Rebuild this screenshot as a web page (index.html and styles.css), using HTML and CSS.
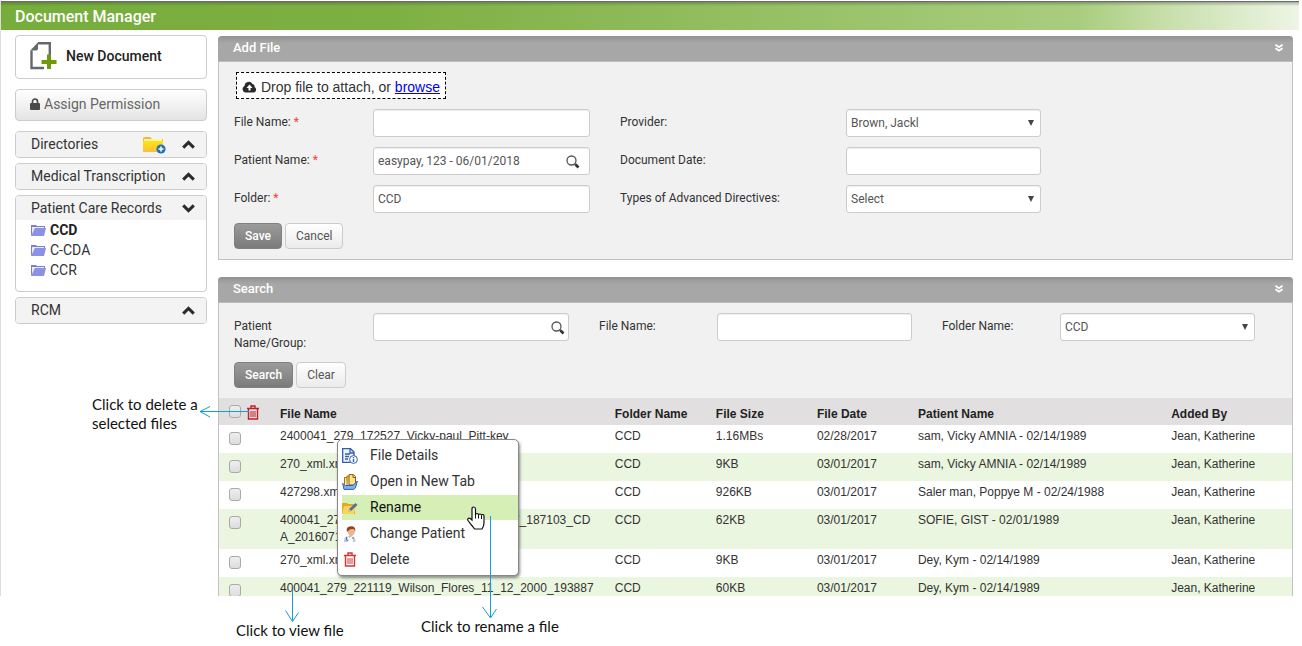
FILE: index.html
```html
<!DOCTYPE html>
<html lang="en">
<head>
<meta charset="utf-8">
<title>Document Manager</title>
<link rel="stylesheet" href="styles.css">
</head>
<body>
<svg class="defs" width="0" height="0" aria-hidden="true">
  <defs>
    <linearGradient id="gold" x1="0" y1="0" x2="0" y2="1"><stop offset="0" stop-color="#ffe600"/><stop offset="1" stop-color="#fdbb4a"/></linearGradient>
  </defs>
  <symbol id="folder" viewBox="0 0 15 13"><path d="M0 12V1h5l1 1h8v3H4z" fill="#7780d4"/><path d="M1 3h12v2H4L1 11z" fill="#e9ebfb"/><path d="M4 4h11l-2 8H0z" fill="#8b92e3"/></symbol>
  <symbol id="up" viewBox="0 0 13 9"><path d="M1.200 7.600 6.500 2.400l5.300 5.200" fill="none" stroke="#2b2b2b" stroke-width="3"/></symbol>
  <symbol id="down" viewBox="0 0 13 9"><path d="M1.200 1.400 6.500 6.600l5.300-5.200" fill="none" stroke="#2b2b2b" stroke-width="3"/></symbol>
  <symbol id="lens" viewBox="0 0 14 14"><circle cx="5.500" cy="5.500" r="4.500" fill="none" stroke="#555" stroke-width="1.300"/><path d="m8.500 8.500 1.500 1.500" stroke="#555" stroke-width="1.500"/><path d="m9.500 9.500 3 3" stroke="#333" stroke-width="2.600"/></symbol>
  <symbol id="arrow" viewBox="0 0 6 6"><path d="M0 0h6L3 6z" fill="#444"/></symbol>
  <symbol id="chevrons" viewBox="0 0 8 8"><path d="m.5.7 3.500 2.600L7.500.7M.5 4.200 4 6.800l3.500-2.600" fill="none" stroke="#fff" stroke-width="1.700"/></symbol>
  <symbol id="trash" viewBox="0 0 12 15"><path d="M0 3.500h12M4 3V1h4v2M1.500 4v10h9V4" fill="none" stroke="currentColor" stroke-width="1.400"/><path d="M4 6v6M6 6v6M8 6v6" stroke="currentColor" stroke-width="1"/></symbol>
</svg>
<div class="page">
  <div class="app">
    <header class="topbar"><h1>Document Manager</h1></header>
    <div class="columns">
      <aside class="sidebar">
        <button class="new-doc" type="button">
          <svg width="27" height="28" viewBox="0 0 27 28"><path d="M8 1.200h11.800V13M14 26H1.500V8.500" fill="none" stroke="#66696b" stroke-width="2.400"/><path d="M.3 8.500 8 .3V7l-1 1.500z" fill="#66696b"/><path d="M19 12.500V27M11.500 20h15" stroke="#6d9a0c" stroke-width="4"/></svg>
          New Document
        </button>
        <button class="assign" type="button">
          <svg width="10" height="12" viewBox="0 0 10 12"><path d="M2.500 6V3.500a2.500 2.500 0 0 1 5 0V6" fill="none" stroke="#4a4a4a" stroke-width="1.700"/><rect y="5" width="10" height="7" rx="1" fill="#4a4a4a"/></svg>
          Assign Permission
        </button>
        <section class="box">
          <h2>Directories
            <svg class="add-folder" width="23" height="18" viewBox="0 0 23 18"><path d="M0 3Q0 1 2 1h5l2 2h10q1 0 1 1v11q0 1-1 1H1q-1 0-1-1z" fill="#f8b630"/><path d="M1 3h18v2H1z" fill="#fff3ad"/><path d="M0 5h20v10q0 1-1 1H1q-1 0-1-1z" fill="url(#gold)"/><circle cx="18" cy="13" r="4.600" fill="#2173b8"/><path d="M18 10.500v5M15.500 13h5" stroke="#fff" stroke-width="1.600"/></svg>
            <svg width="13" height="9"><use href="#up"/></svg></h2>
        </section>
        <section class="box"><h2>Medical Transcription <svg width="13" height="9"><use href="#up"/></svg></h2></section>
        <section class="box open">
          <h2>Patient Care Records <svg width="13" height="9"><use href="#down"/></svg></h2>
          <ul class="tree">
            <li class="current"><svg width="15" height="13"><use href="#folder"/></svg>CCD</li>
            <li><svg width="15" height="13"><use href="#folder"/></svg>C-CDA</li>
            <li><svg width="15" height="13"><use href="#folder"/></svg>CCR</li>
          </ul>
        </section>
        <section class="box"><h2>RCM <svg width="13" height="9"><use href="#up"/></svg></h2></section>
      </aside>
      <main class="content">
        <section class="panel">
          <h2 class="panel-head">Add File <svg width="8" height="8"><use href="#chevrons"/></svg></h2>
          <form class="panel-body">
            <div class="drop">
              <svg width="15" height="12" viewBox="0 0 15 12"><path d="M3.500 11.500a3.500 3.500 0 0 1-1-6.600A4.300 4.300 0 0 1 10.500 3a2.500 2.500 0 0 1 2 3 3 3 0 0 1-.5 5.500z" fill="#2b2b2b"/><path d="M7.500 3.500 4.500 7h2v2.500h2V7h2z" fill="#fff"/></svg>
              <span>Drop file to attach, or <a href="#">browse</a></span>
            </div>
            <div class="add-grid">
              <label for="fname">File Name: <b>*</b></label>
              <input id="fname" type="text">
              <label class="second" for="provider">Provider:</label>
              <span class="pick"><select id="provider"><option>Brown, Jackl</option></select><svg width="6" height="6"><use href="#arrow"/></svg></span>
              <label for="pname">Patient Name: <b>*</b></label>
              <span class="find"><input id="pname" type="text" value="easypay, 123 - 06/01/2018"><svg width="14" height="14"><use href="#lens"/></svg></span>
              <label class="second" for="ddate">Document Date:</label>
              <input id="ddate" type="text">
              <label for="folderf">Folder: <b>*</b></label>
              <input id="folderf" type="text" value="CCD">
              <label class="second" for="types">Types of Advanced Directives:</label>
              <span class="pick"><select id="types"><option>Select</option></select><svg width="6" height="6"><use href="#arrow"/></svg></span>
            </div>
            <div class="buttons"><button class="primary" type="button">Save</button><button type="button">Cancel</button></div>
          </form>
        </section>
        <section class="panel results">
          <h2 class="panel-head">Search <svg width="8" height="8"><use href="#chevrons"/></svg></h2>
          <form class="panel-body">
            <div class="search-grid">
              <label for="group">Patient<br>Name/Group:</label>
              <span class="find"><input id="group" type="text"><svg width="14" height="14"><use href="#lens"/></svg></span>
              <label class="second" for="sfile">File Name:</label>
              <input id="sfile" type="text">
              <label class="second" for="sfolder">Folder Name:</label>
              <span class="pick"><select id="sfolder"><option>CCD</option></select><svg width="6" height="6"><use href="#arrow"/></svg></span>
            </div>
            <div class="buttons"><button class="primary" type="button">Search</button><button type="button">Clear</button></div>
          </form>
          <table class="files">
            <colgroup><col class="c-check"><col class="c-file"><col class="c-small"><col class="c-small"><col class="c-small"><col class="c-patient"><col></colgroup>
            <thead><tr><th><span class="tools"><input type="checkbox" aria-label="Select all"><svg width="12" height="15"><use href="#trash"/></svg></span></th><th>File Name</th><th>Folder Name</th><th>File Size</th><th>File Date</th><th>Patient Name</th><th>Added By</th></tr></thead>
            <tbody>
              <tr><td><input type="checkbox" aria-label="Select file"></td><td>2400041_279_172527_Vicky-paul_Pitt-key</td><td>CCD</td><td>1.16MBs</td><td>02/28/2017</td><td>sam, Vicky AMNIA - 02/14/1989</td><td>Jean, Katherine</td></tr>
              <tr><td><input type="checkbox" aria-label="Select file"></td><td>270_xml.xml</td><td>CCD</td><td>9KB</td><td>03/01/2017</td><td>sam, Vicky AMNIA - 02/14/1989</td><td>Jean, Katherine</td></tr>
              <tr><td><input type="checkbox" aria-label="Select file"></td><td>427298.xml</td><td>CCD</td><td>926KB</td><td>03/01/2017</td><td>Saler man, Poppye M - 02/24/1988</td><td>Jean, Katherine</td></tr>
              <tr><td><input type="checkbox" aria-label="Select file"></td><td>400041_279_221119_C11_12_2000_193887_187103_CDA_20160712</td><td>CCD</td><td>62KB</td><td>03/01/2017</td><td>SOFIE, GIST - 02/01/1989</td><td>Jean, Katherine</td></tr>
              <tr><td><input type="checkbox" aria-label="Select file"></td><td>270_xml.xml</td><td>CCD</td><td>9KB</td><td>03/01/2017</td><td>Dey, Kym - 02/14/1989</td><td>Jean, Katherine</td></tr>
              <tr><td><input type="checkbox" aria-label="Select file"></td><td>400041_279_221119_Wilson_Flores_11_12_2000_193887</td><td>CCD</td><td>60KB</td><td>03/01/2017</td><td>Dey, Kym - 02/14/1989</td><td>Jean, Katherine</td></tr>
            </tbody>
          </table>
        </section>
      </main>
    </div>
  </div>

  <ul class="menu">
    <li><svg width="16" height="16" viewBox="0 0 16 16"><path d="M.7.700h7.800L12 4v10.300H.7z" fill="#eef4ff" stroke="#2f5bb5" stroke-width="1.300"/><path d="M8 1v4h4M3 6h5M3 8.500h4M3 11h3" fill="none" stroke="#2f5bb5" stroke-width="1.300"/><circle cx="11.500" cy="11.500" r="3.900" fill="#fff" stroke="#2f5bb5"/><path d="M11.500 9v1.200M11.500 11v3" stroke="#2f5bb5" stroke-width="1.400"/></svg>File Details</li>
    <li><svg width="16" height="16" viewBox="0 0 16 16"><path d="M2.500 11V3.500h3" fill="#ffe27a" stroke="#a8720b"/><path d="M5 11V2h2.500" fill="#ffd75a" stroke="#a8720b"/><path d="M7 11V.6h4.500l2 2V11z" fill="#ffe58a" stroke="#8a5a07"/><path d="M11 1v2.500h2.500" fill="none" stroke="#8a5a07"/><path d="m.6 9.500 2.900 2H11l4.400-4.500-2 7-2 1.400H2z" fill="#7fb0f2" stroke="#315fb5"/></svg>Open in New Tab</li>
    <li class="active"><svg width="16" height="16" viewBox="0 0 16 16"><path d="M0 3h5l1 1h7v10H0z" fill="#e6a91e"/><path d="M2 6h12l-2 8H0z" fill="#fbd45a"/><path d="m6 12 1-3 6.500-6 2 2L9 11z" fill="#52739b"/><path d="m6 12 1-3 2 2z" fill="#e9d8b8"/></svg>Rename</li>
    <li><svg width="16" height="16" viewBox="0 0 16 16"><path d="M2 16q-.5-5 3.500-6h4q4.500 1 4 6z" fill="#b9cfdf"/><path d="m5.500 9.500 2 3 3-3 .5 6.500H6z" fill="#fff"/><path d="M4.500 11v3q1.500 1 2 0M11 11v2" fill="none" stroke="#55788f"/><path d="M5 4q0-3 4-3t4 3-1 4-2.500 2.500T6.500 8 5 4z" fill="#edb48d"/><path d="M5 6Q3.500.300 9 .2q5 0 4.200 5.300L12 3 8 3.200z" fill="#8c4420"/></svg>Change Patient</li>
    <li><svg class="red" width="12" height="15"><use href="#trash"/></svg>Delete</li>
  </ul>

  <svg class="mark arrow-left" width="50" height="12" viewBox="0 0 50 12"><path d="M50 5.500H1M11 .5 1 5.500l10 5.500"/></svg>
  <svg class="mark arrow-view" width="14" height="33" viewBox="0 0 14 33"><path d="M7.500 0v31M.5 20.500l7 11 6-9"/></svg>
  <svg class="mark arrow-rename" width="16" height="103" viewBox="0 0 16 103"><path d="M8.500 0v101M.5 91l8 11 6-9"/></svg>
  <svg class="cursor" width="18" height="24" viewBox="0 0 18 24"><path d="M5 13V3q0-2 1.700-2t1.800 2v6q0-1.500 1.500-1.500T11.500 9q0-1 1.500-1t1.500 1.500q.2-1 1.400-1T17 10.500V17q0 3-2 6H7.500Q6 20.500 4 18.500L1 14.500q-.8-1.500.5-2.200T5 14z" fill="#fff" stroke="#111" stroke-width="1.200"/><path d="M8.500 9v3.500M11.500 9v3.500M14.500 9.500V13" stroke="#111"/></svg>
  <p class="note note-delete">Click to delete a<br>selected files</p>
  <p class="note note-view">Click to view file</p>
  <p class="note note-rename">Click to rename a file</p>
</div>
</body>
</html>
```
FILE: styles.css
```css
* { box-sizing: border-box; }
body { margin: 0; background: #fff; color: #333; font: 12px/17px Roboto, sans-serif; }
h1, h2, p, ul { margin: 0; padding: 0; }
ul { list-style: none; }
svg { display: block; flex: none; }
button, input, select { font: inherit; }
.defs { position: absolute; }
.page { position: relative; min-height: 100vh; overflow: hidden; }
.app { padding-top: 1px; border-left: 1px solid #ddd; max-height: 596px; overflow: hidden; }

.topbar {
  height: 29px; margin: 0 3px 0 -1px; padding: 3px 15px 0; color: #fff;
  border-top: 1px solid #686b68;
  background: linear-gradient(rgba(60, 70, 60, .4), rgba(60, 70, 60, 0) 4px), linear-gradient(90deg, #76ad3b, #7db043 30%, #a9cd7e 83%, #c9dfac 90%, #edf5e4);
}
.topbar h1 { font-size: 16px; line-height: 24px; font-weight: 500; }

.columns { display: flex; gap: 11px; padding: 5px 9px 0 14px; align-items: flex-start; }
.sidebar { flex: 0 0 192px; display: flex; flex-direction: column; gap: 5px; font-size: 14px; }
.content { flex: 1; min-width: 0; padding-top: 1px; }

.new-doc, .assign { display: flex; align-items: center; padding: 0 14px 2px; border: 1px solid #ccc; border-radius: 4px; font-size: 14px; margin-bottom: 5px; }
.new-doc { height: 44px; gap: 9px; background: #fff; color: #222; font-weight: 500; }
.assign { height: 32px; gap: 4px; color: #666; background: linear-gradient(#fff, #e4e4e4); }
.box { border: 1px solid #ccc; border-radius: 4px; background: #fff; overflow: hidden; }
.box h2 { display: flex; align-items: center; justify-content: space-between; height: 25px; padding: 0 11px 0 15px; background: #f3f3f3; font-size: 14px; font-weight: 400; }
.add-folder { margin: 0 16px 0 auto; }
.open { min-height: 97px; }
.open h2 { height: 24px; }
.tree { padding-bottom: 10px; }
.tree li { display: flex; align-items: center; gap: 4px; height: 20px; padding-left: 15px; }
.current { color: #222; font-weight: 700; }

.panel { border: 1px solid #c0c2c4; border-top: 0; border-radius: 4px 4px 0 0; background: #f1f1f1; }
.results { margin-top: 17px; }
.panel-head {
  display: flex; align-items: center; justify-content: space-between; height: 26px; margin: 0 -1px; padding: 0 10px 2px 15px;
  border-bottom: 1px solid #bbb; border-radius: 4px 4px 0 0; color: #fff; font-size: 13px; font-weight: 500;
  background: linear-gradient(#929292, #a7a7a7 7px);
}
.panel-body { padding: 10px 0 10px 15px; }
.drop {
  display: flex; align-items: center; gap: 4px; width: max-content; height: 27px; margin: 0 2px 10px; padding: 3px 5px 0;
  border: 1px dashed #000; background: #fff; font: 14px/17px "Liberation Sans", sans-serif;
}
.drop a { color: #00e; }
.add-grid, .search-grid { display: grid; align-items: start; row-gap: 10px; }
.add-grid { grid-template-columns: 139fr 217fr 256fr 195fr 251fr; }
.search-grid { grid-template-columns: 139fr 196fr 148fr 195fr 148fr 195fr 37fr; }
.add-grid > *, .search-grid > * { min-width: 0; }
.add-grid > :nth-child(4n + 1) { grid-column: 1; }
label { padding-top: 5px; }
.second { padding-left: 30px; }
label b { color: #f04438; font-weight: 400; }
.find, .pick { position: relative; display: block; }
input[type="text"], select { display: block; width: 100%; height: 28px; padding: 0 4px; border: 1px solid #ccc; border-radius: 3px; background: #fff; color: #555; box-shadow: inset 0 1px 1px #eee; }
select { appearance: none; }
.find svg { position: absolute; right: 10px; top: 8px; }
.search-grid .find svg { right: 4px; }
.pick svg { position: absolute; right: 7px; top: 11px; }
.buttons { display: flex; gap: 3px; margin-top: 10px; }
.buttons button { height: 26px; padding: 0 10px; border: 1px solid #ccc; border-radius: 4px; color: #555; background: linear-gradient(#fff, #ebebeb); }
.buttons .primary { border-color: #808080; background: linear-gradient(#9b9b9b, #7b7b7b); color: #fff; font-weight: 500; }

.files { width: 100%; table-layout: fixed; border-collapse: collapse; background: #fff; font: 12px/17px "Liberation Sans", sans-serif; }
.c-check { width: 56px; }
.c-file { width: 31.2%; }
.c-small { width: 9.42%; }
.c-patient { width: 23.6%; }
th, td { padding: 3px 0 3px 5px; text-align: left; vertical-align: top; }
th { height: 27px; padding-top: 8px; padding-bottom: 2px; background: #e1dfe0; color: #222; }
td { height: 28px; }
td:nth-child(2) { padding-right: 14px; word-break: break-all; }
th:first-child, td:first-child { padding: 7px 0 0 10px; }
tbody tr:nth-child(even) { background: #eaf6df; }
.tools { display: flex; gap: 6px; color: #c22026; }
input[type="checkbox"] { display: block; appearance: none; width: 12px; height: 13px; margin: 0; border: 1px solid #aaa; border-radius: 3px; background: linear-gradient(#eee, #ddd); }

.menu {
  position: absolute; left: 337px; top: 439px; width: 182px; padding: 3px 0 3px 4px;
  display: grid; row-gap: 1px;
  border: 1px solid #888; border-radius: 5px; background: #fff; box-shadow: 1px 2px 3px rgba(0, 0, 0, .45); font-size: 14px;
}
.menu li { display: flex; align-items: center; gap: 12px; height: 25px; }
.menu svg { width: 16px; }
.menu .active { background: #d5efb7; color: #111; }
.menu .red { color: #d33434; }

.mark { position: absolute; fill: none; stroke: #159bd7; stroke-width: 1; }
.arrow-left { left: 199px; top: 406px; }
.arrow-view { left: 285px; top: 590px; }
.arrow-rename { left: 482px; top: 516px; }
.cursor { position: absolute; left: 467px; top: 506px; }
.note { position: absolute; color: #111; font: 15px/19px Lato, sans-serif; white-space: nowrap; }
.note-delete { left: 92px; top: 395px; }
.note-view { left: 236px; top: 621px; }
.note-rename { left: 421px; top: 617px; }
```
